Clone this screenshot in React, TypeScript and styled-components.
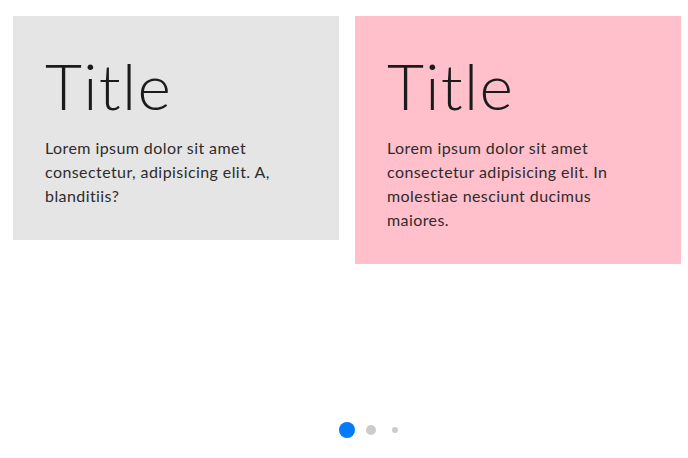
import * as React from 'react'
import styled, { createGlobalStyle } from 'styled-components'

const GlobalStyle = createGlobalStyle`
  html, body {
    margin: 0;
    padding: 0;
    background: #ffffff;
  }
  body {
    font-family: 'Lato', 'Noto Sans', sans-serif;
    color: #222222;
  }
`

const Page = styled.div`
  height: 458px;
  display: flex;
  flex-direction: column;
  box-sizing: border-box;
  padding: 16px 7px 20px 13px;
`

const Track = styled.div`
  display: flex;
  align-items: flex-start;
  gap: 16px;
`

const Card = styled.div<{ $bg: string }>`
  flex: 0 0 326px;
  box-sizing: border-box;
  padding: 32px;
  background: ${(p) => p.$bg};
`

const Title = styled.h2`
  margin: 0 0 12px;
  font-size: 64px;
  font-weight: 300;
  line-height: 76px;
  letter-spacing: 1.3px;
  color: #1b1b1b;
`

const Text = styled.p`
  margin: 0;
  font-size: 16px;
  line-height: 24px;
  letter-spacing: 0.42px;
  color: #2e2b2b;
`

const Pagination = styled.div`
  margin-top: auto;
  display: flex;
  justify-content: center;
  padding-left: 48px;
`

const Slot = styled.span`
  width: 24px;
  height: 16px;
  display: flex;
  align-items: center;
  justify-content: center;
`

const Bullet = styled.span<{ $size: number; $active?: boolean }>`
  width: ${(p) => p.$size}px;
  height: ${(p) => p.$size}px;
  border-radius: 50%;
  background: ${(p) => (p.$active ? '#007aff' : '#cccccc')};
`

const slides = [
  {
    bg: '#e5e5e5',
    text: 'Lorem ipsum dolor sit amet consectetur, adipisicing elit. A, blanditiis?',
  },
  {
    bg: '#ffc0cb',
    text: 'Lorem ipsum dolor sit amet consectetur adipisicing elit. In molestiae nesciunt ducimus maiores.',
  },
]

const App = () => {
  return (
    <>
      <GlobalStyle />
      <Page>
        <Track>
          {slides.map((s, i) => (
            <Card key={i} $bg={s.bg}>
              <Title>Title</Title>
              <Text>{s.text}</Text>
            </Card>
          ))}
        </Track>
        <Pagination>
          <Slot>
            <Bullet $size={16} $active />
          </Slot>
          <Slot>
            <Bullet $size={10} />
          </Slot>
          <Slot>
            <Bullet $size={6} />
          </Slot>
        </Pagination>
      </Page>
    </>
  )
}

export default App
